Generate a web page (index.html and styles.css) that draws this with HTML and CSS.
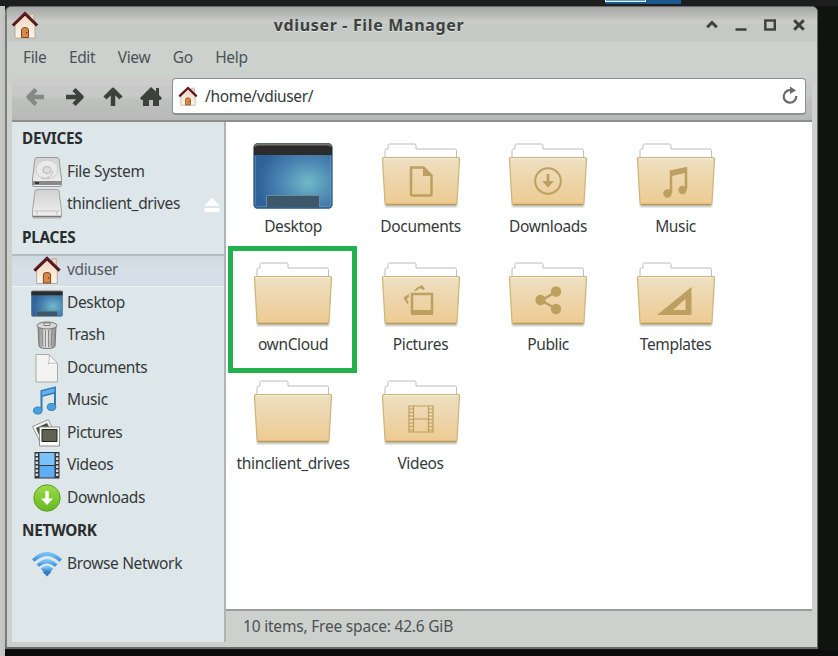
FILE: index.html
```html
<!DOCTYPE html>
<html lang="en">
<head>
<meta charset="utf-8">
<title>vdiuser - File Manager</title>
<link rel="stylesheet" href="styles.css">
</head>
<body>
<svg class="defs" width="0" height="0" aria-hidden="true">
  <defs>
    <linearGradient id="tan" x1="0" y1="0" x2="0" y2="1"><stop offset="0" stop-color="#ede0c3"/><stop offset="1" stop-color="#eeca91"/></linearGradient>
    <linearGradient id="wall" x1="0" y1="0" x2="0" y2="1"><stop offset="0" stop-color="#f0d3bd"/><stop offset="1" stop-color="#fbf7ec"/></linearGradient>
    <linearGradient id="metal" x1="0" y1="0" x2="0" y2="1"><stop offset="0" stop-color="#d2d2d2"/><stop offset="1" stop-color="#f1f1f1"/></linearGradient>
    <linearGradient id="can" x1="0" y1="0" x2="1" y2="0"><stop offset="0" stop-color="#888"/><stop offset=".45" stop-color="#e8e8e8"/><stop offset="1" stop-color="#888"/></linearGradient>
    <linearGradient id="blue" x1="0" y1="0" x2="0" y2="1"><stop offset="0" stop-color="#74c0fa"/><stop offset="1" stop-color="#3f8fd9"/></linearGradient>
    <linearGradient id="green" x1="0" y1="0" x2="0" y2="1"><stop offset="0" stop-color="#9bdc4b"/><stop offset="1" stop-color="#66b81f"/></linearGradient>
    <radialGradient id="screen" cx=".69" cy=".6" r=".65"><stop offset="0" stop-color="#71b9ca"/><stop offset=".55" stop-color="#4a84b2"/><stop offset="1" stop-color="#2f6299"/></radialGradient>
    <filter id="soft" x="-10%" y="-10%" width="120%" height="130%"><feGaussianBlur stdDeviation="1"/></filter>
    <symbol id="house" viewBox="0 0 28 28">
      <path d="M19 3h4v9h-4z" fill="#eadbcb" stroke="#b99d87" stroke-width=".8"/>
      <path d="M4 12.500L14 3l10 9.500V27H4z" fill="url(#wall)" stroke="#b4a18e" stroke-width=".9"/>
      <path d="M10.500 26.500V19q0-2.500 3.500-2.500t3.500 2.500v7.500z" fill="#d38a4b" stroke="#88491e"/>
      <circle cx="15.700" cy="21.800" r=".8" fill="#75401e"/>
      <path d="M1.800 14.500L14 2.700l12.200 11.800" fill="none" stroke="#4c1519" stroke-width="3"/>
      <path d="M2.500 13.200L14 2.200l11.500 11" fill="none" stroke="#7c262a" stroke-width=".8"/>
    </symbol>
    <symbol id="folder" viewBox="0 0 80 68">
      <path d="M4 60h72v4H4z" fill="#8f9a94" opacity=".65" filter="url(#soft)"/>
      <path d="M4 18V7.500q0-1.500 1.500-1.500H7V2.500Q7 1 8.500 1h25Q35 1 35 2.500V6h39q1.500 0 1.500 1.500V18" fill="#fff" stroke="#b8bcc4"/>
      <path d="M3 14.500h74q1.700 0 1.500 1.700L76 60q-.1 1.800-2 1.800H6q-1.900 0-2-1.800L1.500 16.200q-.2-1.700 1.500-1.700z" fill="url(#tan)" stroke="#cab478" stroke-width="1.200"/>
      <path d="M3 15.700h74" stroke="#f6f0df" stroke-width=".8"/>
      <path d="M5 61.300h70" stroke="#b79a5c" stroke-width="1.200"/>
    </symbol>
    <symbol id="desk" viewBox="0 0 80 68">
      <path d="M3 60h74v5H3z" fill="#79877b" opacity=".65" filter="url(#soft)"/>
      <rect x="1" y="1" width="78" height="64" rx="3.500" fill="url(#screen)" stroke="#315b82" stroke-width="1.300"/>
      <path d="M1 12V4q0-3.500 3.500-3.500h71Q79 .5 79 4v8z" fill="#2a2b2a"/>
      <path d="M2 3.500Q2.500 1.500 5 1.500h70q2.500 0 3 2" fill="none" stroke="#747671" stroke-width="2"/>
      <path d="M2.500 13v48.500q0 2 2 2h71q2 0 2-2V13" fill="none" stroke="#86a8c7" stroke-opacity=".4"/>
      <path d="M13.500 64V52.500h53V64" fill="#3c566a" stroke="#698ba1"/>
    </symbol>
  </defs>
</svg>

<div class="wallpaper"></div>
<div class="task"><span></span></div>
<main class="window">
  <header class="titlebar">
    <svg class="appicon" width="28" height="28"><use href="#house"/></svg>
    <h1>vdiuser - File Manager</h1>
    <div class="controls">
      <svg width="14" height="14"><path d="M2.200 9.300L7 4.500l4.800 4.800" fill="none" stroke="#3c403c" stroke-width="3"/></svg>
      <svg width="14" height="14"><path d="M1.500 11.500h11" stroke="#3c403c" stroke-width="2.400"/></svg>
      <svg width="14" height="14"><rect x="2.300" y="2.500" width="9.500" height="9" fill="none" stroke="#3c403c" stroke-width="2.400"/></svg>
      <svg width="14" height="14"><path d="M2.200 2.200l9.600 9.600M11.800 2.200l-9.600 9.600" stroke="#3c403c" stroke-width="3"/></svg>
    </div>
  </header>
  <nav class="menubar"><span>File</span><span>Edit</span><span>View</span><span>Go</span><span>Help</span></nav>
  <div class="toolbar">
    <svg class="tool" width="22" height="22"><path class="arrow faded" d="M20 11H6M12 3.500L4.500 11l7.500 7.500"/></svg>
    <svg class="tool" width="22" height="22"><path class="arrow" d="M3 11h14M11 3.500l7.500 7.500-7.500 7.500"/></svg>
    <svg class="tool" width="22" height="22"><path class="arrow" d="M11 20V5M3 12l8-8 8 8"/></svg>
    <svg class="tool" width="22" height="22"><path d="M11 1L0 12l1.500 2H3v6h6v-6h4v6h6v-6h1.500L22 12l-3-3V2h-3v3.500z" fill="#3c413c"/></svg>
    <div class="address">
      <svg width="20" height="20"><use href="#house"/></svg>
      <span>/home/vdiuser/</span>
      <svg width="18" height="20"><path d="M10.500 4.300A6.300 6.300 0 1 0 15.300 10" fill="none" stroke="#696b69" stroke-width="2.200"/><path d="M9 .5l6 4-6 3.500z" fill="#696b69"/></svg>
    </div>
  </div>
  <div class="body">
    <aside class="sidebar">
      <h2>DEVICES</h2>
      <div class="place"><svg width="32" height="32" viewBox="0 0 32 32"><path d="M4 3q.4-1.500 2-1.500h20q1.600 0 2 1.500l2.500 20v6q0 1.500-1.500 1.500H3q-1.500 0-1.500-1.500v-6z" fill="url(#metal)" stroke="#999"/><ellipse cx="16" cy="13.500" rx="11" ry="9.500" fill="#e9e9e9" stroke="#ccc"/><ellipse cx="16" cy="14" rx="4" ry="3.500" fill="#ddd" stroke="#b8b8b8"/><path d="M10 22q10 2 12-7" fill="none" stroke="#b8b8b8"/><path d="M2 25h28v4H2z" fill="#898989"/><path d="M4 27h4" stroke="#333" stroke-width="2"/></svg><span>File System</span></div>
      <div class="place"><svg width="32" height="32" viewBox="0 0 32 32"><path d="M4 3q.4-1.500 2-1.500h20q1.600 0 2 1.500l2.500 20v5q0 2-1.500 2H3q-1.500 0-1.500-2v-5z" fill="url(#metal)" stroke="#a4a4a4"/><path d="M3 23h26M6 23v4M26 23v4" stroke="#c2c2c2"/><path d="M2 28.500h28" stroke="#777" stroke-width="1.500"/></svg><span>thinclient_drives</span><svg class="eject" width="16" height="16"><path d="M8 .5L15.500 9H.5zM.5 11h15v4H.5z" fill="#fff"/></svg></div>
      <h2>PLACES</h2>
      <div class="place selected"><svg width="32" height="32" viewBox="-1.500 -1.500 31 31"><use href="#house" width="28" height="28"/></svg><span>vdiuser</span></div>
      <div class="place"><svg width="32" height="32"><use href="#desk" x="0" y="3.500" width="32" height="27"/></svg><span>Desktop</span></div>
      <div class="place"><svg width="32" height="32" viewBox="0 0 32 32"><path d="M7 7h18l-1 20q-.5 2.500-8 2.500T8 27z" fill="url(#can)" stroke="#777"/><path d="M11 10l.7 17M14.500 11v17M17.500 11v17M21 10l-.7 17" stroke="#888" stroke-width="1"/><ellipse cx="16" cy="6.500" rx="10" ry="3.500" fill="#d9d9d9" stroke="#777"/><path d="M13 4h6v2.500h-6z" fill="#eee" stroke="#777"/></svg><span>Trash</span></div>
      <div class="place"><svg width="32" height="32" viewBox="0 0 32 32"><path d="M5 2.500h13l8.500 9v18.500H5z" fill="#f3f3f1" stroke="#aaa"/><path d="M18 2.500q1 7-1 9 3-1 9.500 0z" fill="#fff" stroke="#aaa" stroke-width=".8"/></svg><span>Documents</span></div>
      <div class="place"><svg width="32" height="32" viewBox="0 0 32 32"><path d="M10.500 26V7L24 3.500V23M10.500 12L24 8.500" fill="none" stroke="#347db5" stroke-width="2"/><path d="M10.500 7L24 3.500v5L10.500 12z" fill="#63b1f0" stroke="#347db5"/><ellipse cx="6.800" cy="26.500" rx="4.300" ry="3.500" fill="#4b9fe1" stroke="#347db5"/><ellipse cx="20.500" cy="23" rx="4.300" ry="3.500" fill="#4b9fe1" stroke="#347db5"/></svg><span>Music</span></div>
      <div class="place"><svg width="32" height="32" viewBox="0 0 32 32"><path d="M1.500 9.500L17.500 2.500 25 20l-15 7z" fill="#f4f4f2" stroke="#999"/><path d="M5 11l11-5 5 9-11 8z" fill="#4b4e42"/><path d="M8.500 10h20v19h-20z" fill="#fff" stroke="#909090"/><path d="M11 12.500h15v12H11z" fill="#5e624e" stroke="#242620"/></svg><span>Pictures</span></div>
      <div class="place"><svg width="32" height="32" viewBox="0 0 32 32"><path d="M3.500 3h25v26.500h-25z" fill="#343838"/><path d="M8.500 4h15v12h-15z" fill="#79c2fa"/><path d="M8.500 17h15v11.500h-15z" fill="#61adf5"/><path d="M5.800 4.500v24M26.200 4.500v24" stroke="#d5dadd" stroke-width="2.500" stroke-dasharray="2.500 1.500"/></svg><span>Videos</span></div>
      <div class="place"><svg width="32" height="32" viewBox="0 0 32 32"><circle cx="16" cy="16" r="13.200" fill="url(#green)" stroke="#57a222"/><path d="M14.300 9h3.400v7.500H22L16 23l-6-6.500h4.300z" fill="#fff"/></svg><span>Downloads</span></div>
      <h2>NETWORK</h2>
      <div class="place"><svg width="32" height="32" viewBox="0 0 32 32"><g fill="none" stroke="url(#blue)" stroke-width="3.700"><path d="M2.300 12.500Q16-.5 29.700 12.500"/><path d="M6.800 17.500Q16 9 25.200 17.500"/><path d="M11 22q5-4.500 10 0"/></g><path d="M16 28.500L11.700 24q4.300-4 8.600 0z" fill="#347dc1"/></svg><span>Browse Network</span></div>
    </aside>
    <section class="content">
      <div class="files">
        <div class="file"><svg width="80" height="68"><use href="#desk"/></svg><span>Desktop</span></div>
        <div class="file"><svg width="80" height="68"><use href="#folder"/><path class="mark" d="M30 24.500h12.500l8 8V51q0 1.500-1.500 1.500H31.500Q30 52.500 30 51z"/><path class="solid" d="M42 23.500l9.500 9.500H42z"/></svg><span>Documents</span></div>
        <div class="file"><svg width="80" height="68"><use href="#folder"/><circle class="mark thin" cx="40" cy="38" r="12.800"/><path class="solid" d="M38.700 31h2.600v7H46l-6 6.500-6-6.500h4.700z"/></svg><span>Downloads</span></div>
        <div class="file"><svg width="80" height="68"><use href="#folder"/><path class="mark" d="M35 50V28.500l15-3V46"/><path class="solid" d="M34 28l17-4v5.500l-17 4z"/><circle class="solid" cx="31.500" cy="50.500" r="4.200"/><circle class="solid" cx="46.500" cy="47" r="4.200"/></svg><span>Music</span></div>
        <div class="file highlighted"><svg width="80" height="68"><use href="#folder"/></svg><span>ownCloud</span></div>
        <div class="file"><svg width="80" height="68"><use href="#folder"/><path class="mark" d="M31 32h20v18H31z"/><path class="solid" d="M30 48h22v5H30zM33 29q3-4 8-6l3 4-2 1-3-2-4 3zM28 32q-4 2-5.500 4l4.500 7 .5-3-2-3 2.500-2z"/></svg><span>Pictures</span></div>
        <div class="file"><svg width="80" height="68"><use href="#folder"/><path class="mark" d="M48 30L33 38.500 48 46.500"/><circle class="solid" cx="48" cy="29.500" r="5.200"/><circle class="solid" cx="32.500" cy="38" r="5.200"/><circle class="solid" cx="48" cy="47" r="5.200"/></svg><span>Public</span></div>
        <div class="file"><svg width="80" height="68"><use href="#folder"/><path class="solid" fill-rule="evenodd" d="M55.500 25v28H21zM49.500 37L37 48h12.500z"/></svg><span>Templates</span></div>
        <div class="file"><svg width="80" height="68"><use href="#folder"/></svg><span>thinclient_drives</span></div>
        <div class="file"><svg width="80" height="68"><use href="#folder"/><path class="film" d="M28 26h24v26H28zM32.500 26v26M47.500 26v26M32.500 39h15M28 29h4.500M28 32.500h4.500M28 36h4.500M28 39.500h4.500M28 43h4.500M28 46.500h4.500M28 50h4.500M47.500 29H52M47.500 32.500H52M47.500 36H52M47.500 39.500H52M47.500 43H52M47.500 46.500H52M47.500 50H52"/></svg><span>Videos</span></div>
      </div>
      <footer class="status">10 items, Free space: 42.6 GiB</footer>
    </section>
  </div>
</main>
</body>
</html>
```
FILE: styles.css
```css
*, *::after { box-sizing: border-box; }
body {
  margin: 0;
  width: 838px;
  height: 656px;
  overflow: hidden;
  position: relative;
  padding: 6px 0 0 5px;
  background: linear-gradient(#1d1e1e 0 6px, #101411 6px 650px, #0c0c0c 650px);
  font-family: "Noto Sans", sans-serif;
  font-size: 15.500px;
  letter-spacing: -.350px;
  color: #363a3b;
}
svg { display: block; flex: none; }
.defs { position: absolute; }
.wallpaper {
  position: absolute;
  left: 0;
  top: 6px;
  width: 5px;
  height: 650px;
  background: linear-gradient(90deg, #c6c9c6, #bfc2bf);
}
.task {
  position: absolute;
  left: 605px;
  top: 0;
  width: 76px;
  height: 4px;
  background: #1b5990;
}
.task span {
  display: block;
  width: 41px;
  height: 2px;
  background: #529bdd;
  border: solid #f1f5f8;
  border-width: 0 1px 1px;
}
.window {
  width: 813px;
  height: 643px;
  border: 1px solid #686b68;
  border-left: 2px solid #777a77;
  border-bottom-width: 2px;
  border-radius: 6px 6px 0 0;
  background: #cdd1cd;
  display: flex;
  flex-direction: column;
  padding: 0 5px 5px;
  overflow: hidden;
}
.titlebar {
  height: 35px;
  flex: none;
  margin: 0 -5px;
  padding: 0 11px 0 4px;
  background: linear-gradient(#a5a6a5, #c8cac8 14px, #cacdca 16px, #c5c9c5 17px, #c5c9c5);
  display: flex;
  align-items: center;
}
.titlebar h1 {
  flex: 1;
  margin: 0 7px 0 1px;
  text-align: center;
  font-size: 16px;
  letter-spacing: .650px;
  line-height: 20px;
  font-weight: 700;
  color: #3d423e;
  text-shadow: 0 1px #e1e3e1;
}
.controls { display: flex; gap: 15px; }
.menubar {
  height: 36px;
  flex: none;
  display: flex;
  align-items: center;
  gap: 22.500px;
  padding: 0 0 7px 11px;
  color: #4b5357;
}
.toolbar {
  height: 44px;
  flex: none;
  display: flex;
  align-items: center;
  padding: 0 6px 5px 12px;
  background: linear-gradient(#cdcbce 0 7px, #c6c9c6 8px 18px, #bec0be 22px, #b9bab9 39px, #b5b7b5);
  border-bottom: 2px solid #8d908e;
}
.tool { margin-right: 17px; }
.tool + .tool { margin-right: 16.700px; }
.arrow { fill: none; stroke: #3c413c; stroke-width: 4.500; stroke-linejoin: round; }
.faded { stroke: #858985; }
.address {
  height: 37px;
  flex: 1;
  margin-left: -7px;
  padding: 0 6px 0 5px;
  display: flex;
  align-items: center;
  gap: 7px;
  background: #fff;
  border: 1px solid #8e918f;
  border-bottom-width: 2px;
  border-radius: 4px;
}
.address span { flex: 1; padding-bottom: 1px; }
.body { flex: 1; display: flex; min-height: 0; }
.sidebar {
  width: 214px;
  flex: none;
  background: #dde6e8;
  border-right: 2px solid #aeb3b4;
}
.sidebar h2 {
  margin: 0;
  padding-left: 10px;
  height: 33.500px;
  line-height: 32px;
  font-size: 15.300px;
  letter-spacing: -.300px;
  font-weight: 700;
  color: #292d2f;
}
.place {
  height: 32.500px;
  padding: 0 4px 0 19px;
  display: flex;
  align-items: center;
  gap: 4px;
}
.place span { flex: 1; white-space: nowrap; padding-bottom: 2px; }
.eject { margin-top: 2px; }
.selected {
  background: linear-gradient(#b4bdc1 0 2px, #cfd9df 2px, #d7dfe9 14px, #d5dfe8);
  border-bottom: 1px solid #eef2f3;
  color: #555a5e;
}
.content { flex: 1; display: flex; flex-direction: column; min-width: 0; background: #fff; }
.files {
  flex: 1;
  display: grid;
  grid-template-columns: repeat(4, 127.500px);
  grid-auto-rows: 118.700px;
  align-content: start;
  padding: 11px 0 0 3.300px;
}
.file {
  position: relative;
  display: flex;
  flex-direction: column;
  align-items: center;
  padding-top: 10px;
  gap: 4.500px;
  line-height: 20px;
  white-space: nowrap;
}
.highlighted::after {
  content: "";
  position: absolute;
  left: -1.300px;
  top: -6px;
  width: 129px;
  height: 127px;
  border: 5px solid #22b14c;
}
.mark { fill: none; stroke: #bd9f5f; stroke-width: 2.500; }
.thin { stroke-width: 2; }
.solid { fill: #bd9f5f; }
.film { fill: none; stroke: #bd9f5f; stroke-width: 1.200; }
.status {
  height: 33px;
  flex: none;
  border-top: 2px solid #9b9e9c;
  background: #cdd1cd;
  padding-left: 17px;
  line-height: 31px;
  letter-spacing: -.200px;
  color: #4b5052;
}
```
